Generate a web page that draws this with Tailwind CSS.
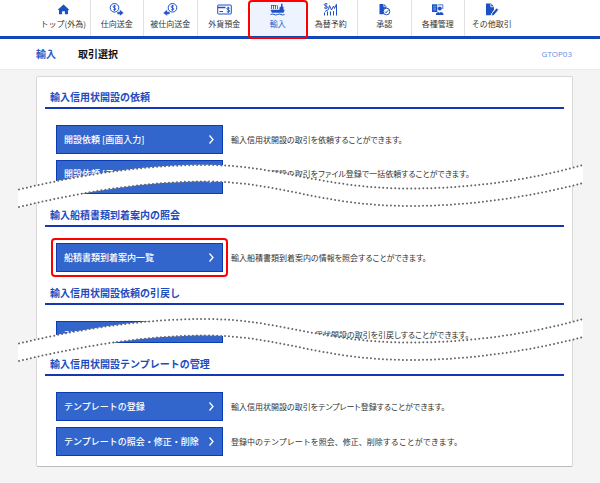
<!DOCTYPE html>
<html lang="ja">
<head>
    <meta charset="UTF-8">
    <meta name="viewport" content="width=device-width, initial-scale=1.0">
    <title>取引選択</title>
    <script src="https://cdn.jsdelivr.net/npm/@tailwindcss/browser@4"></script>
</head>
<body class="min-h-screen bg-[#f4f4f4] font-['Noto_Sans_CJK_JP','Liberation_Sans',sans-serif] text-[#333]">
    <!-- Global navigation -->
    <nav class="bg-white border-b-3 border-[#1446b8] pl-[37px] pr-7">
        <ul class="grid grid-cols-10 h-9 text-[8px] leading-3 text-center whitespace-nowrap">
            <li class="border-r border-[#e2e2e2]">
                <a href="#" class="flex flex-col items-center gap-[2px] pt-[3px]">
                    <svg class="size-[13px]" viewBox="0 0 13 13" fill="#1c50c4"><path d="M6.5 1.500 12 6.600 11 7.500V11.300H7.900V8.300H5.100V11.300H2V7.500L1 6.600z"/></svg>
                    トップ(外為)
                </a>
            </li>
            <li class="border-r border-[#e2e2e2]">
                <a href="#" class="flex flex-col items-center gap-[2px] pt-[3px]">
                    <svg class="w-[15px] h-[13px]" viewBox="0 0 15 13" fill="none" stroke="#1c50c4"><circle cx="5.500" cy="4.800" r="4.300"/><path d="M7 3.300C6.500 2.500 4.100 2.500 4.100 3.800S7 4.800 7 6 4.300 7.100 3.900 6.200M5.500 1.800V7.900" stroke-width=".9"/><path d="M8.200 8.800H10.800V6.600L14.700 9.900 10.800 13V11.200H8.200z" fill="#1c50c4" stroke="#fff" stroke-width=".3"/></svg>
                    仕向送金
                </a>
            </li>
            <li class="border-r border-[#e2e2e2]">
                <a href="#" class="flex flex-col items-center gap-[2px] pt-[3px]">
                    <svg class="w-[15px] h-[13px]" viewBox="0 0 15 13" fill="none" stroke="#1c50c4"><circle cx="9.500" cy="4.800" r="4.300"/><path d="M11 3.300C10.500 2.500 8.100 2.500 8.100 3.800S11 4.800 11 6 8.300 7.100 7.900 6.200M9.500 1.800V7.900" stroke-width=".9"/><path d="M6.800 8.800H4.200V6.600L.3 9.900 4.200 13V11.200H6.800z" fill="#1c50c4" stroke="#fff" stroke-width=".3"/></svg>
                    被仕向送金
                </a>
            </li>
            <li>
                <a href="#" class="flex flex-col items-center gap-[2px] pt-[3px]">
                    <svg class="w-[15px] h-[13px]" viewBox="0 0 15 13" fill="none" stroke="#1c50c4"><rect x=".7" y="2" width="13.600" height="9" rx=".6"/><path d="M1 4.500H8.500" stroke-width="1.500"/><path d="M2.500 8.500H6"/><path d="M12.600 5.300C12 4.400 9.900 4.500 9.900 5.700S12.700 6.600 12.700 7.900 10.300 9.300 9.700 8.300M11.300 3.700V10" stroke-width="1"/></svg>
                    外貨預金
                </a>
            </li>
            <li class="relative bg-[#eef4ff] text-[#2a5cc8]">
                <a href="#" aria-current="page" class="flex flex-col items-center gap-[2px] pt-[3px]">
                    <svg class="w-[15px] h-[13px]" viewBox="0 0 15 13" fill="#1c50c4"><path d="M1 2H2V6H1zM3 2H4V6H3zM5 2H6V6H5zM7 2.500H8V6H7z" opacity=".8"/><path d="M1 2H6.500V2.700H1z"/><path d="M11 .8H12.500V3.500L13.500 4V7H9.500V4.500L11 3.500z"/><path d="M.5 6.800H14.700L13.500 9.800H1.800z"/><path d="M.5 11.500Q2.300 10.500 4 11.500T7.500 11.500 11 11.500 14.500 11.500" fill="none" stroke="#1c50c4"/></svg>
                    輸入
                </a>
                <span class="absolute top-0 -inset-x-[3px] -bottom-[3px] border-2 border-[#ff0000] rounded-sm"></span>
            </li>
            <li class="border-r border-[#e2e2e2]">
                <a href="#" class="flex flex-col items-center gap-[2px] pt-[3px]">
                    <svg class="w-[15px] h-[13px]" viewBox="0 0 15 13" fill="none" stroke="#1c50c4"><path d="M4.500 1C3.500 .2 1.200.5 1.200 1.800S4.700 2.800 4.700 4.200 2 5.500 1 4.600M3 0V6" stroke-width=".9"/><path d="M1.500 12.500V9.500M4.500 12.500V8.500M7.500 12.500V8.500M10.500 12.500V8M13.500 12.500V1.500"/><path d="M2 8.500 5.500 6.500 6.500 2.500 8.500 7 10.500 3 11.500 5.500 13.500 1"/></svg>
                    為替予約
                </a>
            </li>
            <li class="border-r border-[#e2e2e2]">
                <a href="#" class="flex flex-col items-center gap-[2px] pt-[3px]">
                    <svg class="size-[13px]" viewBox="0 0 13 13"><path d="M1.500 1H6L8.500 3.500V6L5.500 11.300H1.500z" fill="#1c50c4"/><path d="M5.800 1V3.700H8.500" fill="none" stroke="#fff" stroke-width=".7"/><circle cx="8.500" cy="8.500" r="3.300" fill="#fff" stroke="#1c50c4"/><path d="M6.900 8.500 8.100 9.800 10.300 7.200" fill="none" stroke="#1c50c4"/></svg>
                    承認
                </a>
            </li>
            <li class="border-r border-[#e2e2e2]">
                <a href="#" class="flex flex-col items-center gap-[2px] pt-[3px]">
                    <svg class="size-[13px]" viewBox="0 0 13 13"><path d="M1 1.300H6.300V9H1z" fill="#1c50c4"/><path d="M2.200 3.300H5.300M2.200 5.100H5M2.200 6.900H5" stroke="#8fb0f0" stroke-width=".8"/><path d="M7.200 1.800H11.800V6" fill="none" stroke="#1c50c4" stroke-width=".8"/><circle cx="8.800" cy="5.600" r="2" fill="#1c50c4"/><path d="M4.800 12C4.800 9.500 6.500 8.900 8.800 8.900S12.500 9.500 12.500 12z" fill="#1c50c4"/><path d="M8 8.800 8.800 10.200 9.600 8.800" fill="#fff"/></svg>
                    各種管理
                </a>
            </li>
            <li>
                <a href="#" class="flex flex-col items-center gap-[2px] pt-[3px]">
                    <svg class="w-[14px] h-[13px]" viewBox="0 0 14 13"><path d="M1 .5H6L9 3.500V6.500L5.500 12.300H1z" fill="#1c50c4"/><path d="M5.800 .6V3.800H9" fill="none" stroke="#fff" stroke-width=".8"/><path d="M11.500 5 13.600 6.800 9 12.300 6.300 13 6.800 10.400z" fill="#1c50c4" stroke="#fff" stroke-width=".7"/></svg>
                    その他取引
                </a>
            </li>
        </ul>
    </nav>

    <!-- Page title -->
    <header class="flex items-center h-[31px] pl-9 pr-7 bg-white border-b border-[#ececec] text-[10px] leading-4 font-bold">
        <span class="text-[#2a5cc8]">輸入</span>
        <h1 class="ml-[22px] text-[#111]">取引選択</h1>
        <span class="ml-auto font-normal text-[8px] text-[#6a8cdc] font-['Open_Sans',sans-serif]">GTOP03</span>
    </header>

    <main class="relative mt-[6px] ml-9 mr-[27px] px-2 pt-[10px] pb-[10px] bg-white border border-[#d8d8d8] border-b-[#bbb] rounded-xs text-[8px]">
        <!-- Opening of import L/C -->
        <section>
            <h2 class="pl-[5px] h-[22px] border-b-2 border-[#1636b4] text-[10px] leading-5 font-bold text-[#1c4cc0]">輸入信用状開設の依頼</h2>
            <div class="flex flex-col gap-[6px] pt-4 pl-[11px]">
                <div class="flex items-center gap-2">
                    <button type="button" class="flex items-center justify-between w-[167px] h-[29px] px-[7px] bg-[#3366cc] border border-[#0c3cb4] text-[9px] text-white font-medium">
                        開設依頼 [画面入力]
                        <svg class="w-[7px] h-[9px]" viewBox="0 0 7 9" fill="none" stroke="#fff" stroke-width="1.300"><path d="M1.500 .5 5 4.500 1.500 8.500"/></svg>
                    </button>
                    <p class="flex-1 leading-3 [font-feature-settings:'palt']">輸入信用状開設の取引を依頼することができます。</p>
                </div>
                <div class="flex items-start gap-2">
                    <button type="button" class="flex items-start justify-between w-[167px] h-[34px] px-[7px] pt-[6px] pb-[10px] bg-[#3366cc] border border-[#0c3cb4] text-[9px] text-white font-medium">
                        開設依頼 [ファイル登録]
                        <svg class="self-end w-[7px] h-[9px]" viewBox="0 0 7 9" fill="none" stroke="#fff" stroke-width="1.300"><path d="M1.500 .5 5 4.500 1.500 8.500"/></svg>
                    </button>
                    <p class="flex-1 pt-2 leading-3 [font-feature-settings:'palt']">輸入信用状開設の取引をファイル登録で一括依頼することができます。</p>
                </div>
            </div>
        </section>

        <!-- Arrival of shipping documents -->
        <section class="mt-[11px]">
            <h2 class="pl-[5px] h-[22px] border-b-2 border-[#1636b4] text-[10px] leading-5 font-bold text-[#1c4cc0]">輸入船積書類到着案内の照会</h2>
            <div class="flex items-center gap-2 pt-4 pl-[11px]">
                <div class="relative">
                    <button type="button" class="flex items-center justify-between w-[167px] h-[29px] px-[7px] bg-[#3366cc] border border-[#0c3cb4] text-[9px] text-white font-medium">
                        船積書類到着案内一覧
                        <svg class="w-[7px] h-[9px]" viewBox="0 0 7 9" fill="none" stroke="#fff" stroke-width="1.300"><path d="M1.500 .5 5 4.500 1.500 8.500"/></svg>
                    </button>
                    <span class="absolute -inset-[5px] border-2 border-[#ff0000] rounded-sm"></span>
                </div>
                <p class="flex-1 leading-3 [font-feature-settings:'palt']">輸入船積書類到着案内の情報を照会することができます。</p>
            </div>
        </section>

        <!-- Withdrawal of requests -->
        <section class="mt-[11px]">
            <h2 class="pl-[5px] h-[22px] border-b-2 border-[#1636b4] text-[10px] leading-5 font-bold text-[#1c4cc0]">輸入信用状開設依頼の引戻し</h2>
            <div class="flex items-start gap-2 pt-4 pl-[11px]">
                <button type="button" class="flex items-start w-[167px] h-[22px] px-[7px] pt-2 bg-[#3366cc] border border-[#0c3cb4] text-[9px] leading-3 text-white font-medium">引戻し</button>
                <p class="flex-1 pt-2 pl-[84px] leading-3 [font-feature-settings:'palt']">用状開設の取引を引戻しすることができます。</p>
            </div>
        </section>

        <!-- Templates -->
        <section class="mt-[11px]">
            <h2 class="relative z-10 pl-[5px] h-[22px] border-b-2 border-[#1636b4] text-[10px] leading-5 font-bold text-[#1c4cc0]">輸入信用状開設テンプレートの管理</h2>
            <div class="flex flex-col gap-[6px] pt-4 pl-[11px]">
                <div class="flex items-center gap-2">
                    <button type="button" class="flex items-center justify-between w-[167px] h-[29px] px-[7px] bg-[#3366cc] border border-[#0c3cb4] text-[9px] text-white font-medium">
                        テンプレートの登録
                        <svg class="w-[7px] h-[9px]" viewBox="0 0 7 9" fill="none" stroke="#fff" stroke-width="1.300"><path d="M1.500 .5 5 4.500 1.500 8.500"/></svg>
                    </button>
                    <p class="flex-1 leading-3 [font-feature-settings:'palt']">輸入信用状開設の取引をテンプレート登録することができます。</p>
                </div>
                <div class="flex items-center gap-2">
                    <button type="button" class="flex items-center justify-between w-[167px] h-[29px] px-[7px] bg-[#3366cc] border border-[#0c3cb4] text-[9px] text-white font-medium">
                        テンプレートの照会・修正・削除
                        <svg class="w-[7px] h-[9px]" viewBox="0 0 7 9" fill="none" stroke="#fff" stroke-width="1.300"><path d="M1.500 .5 5 4.500 1.500 8.500"/></svg>
                    </button>
                    <p class="flex-1 leading-3">登録中のテンプレートを照会、修正、削除することができます。</p>
                </div>
            </div>
        </section>

        <!-- Torn strips where rows are left out -->
        <div class="absolute top-[87px] -left-[19px] -right-[11px] h-11">
            <svg class="size-full" viewBox="0 0 565 44" preserveAspectRatio="none" fill="none">
                <path fill="#fff" d="M0 25.500C72 8.500 132 .8 187 .8 262 .8 302 24.500 392 24.500 452 24.500 512 16 565 .8V19C512 33 452 42 392 42 302 42 262 17.500 187 17.500 132 17.500 72 26 0 43.500z"/>
                <g stroke="#666" stroke-width="2" stroke-linecap="round" stroke-dasharray="0 4">
                    <path d="M1 25.500C72 8.500 132 1 187 1 262 1 302 24.500 392 24.500 452 24.500 512 16 565 1"/>
                    <path d="M1 43C72 26 132 17.500 187 17.500 262 17.500 302 42 392 42 452 42 512 33 565 19"/>
                </g>
            </svg>
        </div>
        <div class="absolute top-[241px] -left-[19px] -right-[11px] h-11">
            <svg class="size-full" viewBox="0 0 565 44" preserveAspectRatio="none" fill="none">
                <path fill="#fff" d="M0 25.500C72 8.500 132 .8 187 .8 262 .8 302 24.500 392 24.500 452 24.500 512 16 565 .8V19C512 33 452 42 392 42 302 42 262 17.500 187 17.500 132 17.500 72 26 0 43.500z"/>
                <g stroke="#666" stroke-width="2" stroke-linecap="round" stroke-dasharray="0 4">
                    <path d="M1 25.500C72 8.500 132 1 187 1 262 1 302 24.500 392 24.500 452 24.500 512 16 565 1"/>
                    <path d="M1 43C72 26 132 17.500 187 17.500 262 17.500 302 42 392 42 452 42 512 33 565 19"/>
                </g>
            </svg>
        </div>
    </main>
</body>
</html>
